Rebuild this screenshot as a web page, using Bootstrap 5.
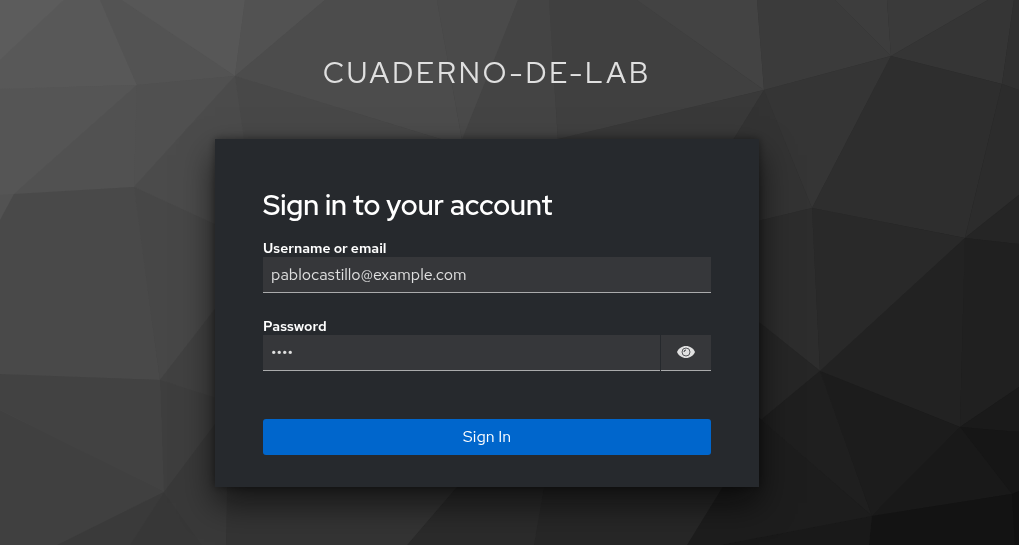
<!DOCTYPE html>
<html lang="en">
<head>
<meta charset="utf-8">
<meta name="viewport" content="width=device-width, initial-scale=1">
<title>Sign in to cuaderno-de-lab</title>
<link href="https://cdn.jsdelivr.net/npm/bootstrap@5.3.0/dist/css/bootstrap.min.css" rel="stylesheet">
<style>
  body { background: #333; color: #fff; font-family: "Red Hat Text", Lato, sans-serif; font-size: 16px; line-height: 24px; }
  .backdrop { position: fixed; inset: 0; width: 100%; height: 100%; z-index: -1; }
  .login-page { padding: 53px 45px 58px 0; }
  .realm-name { font-family: "Red Hat Display", "Red Hat Text", Lato, sans-serif; font-size: 29px; font-weight: 400; line-height: 40px; letter-spacing: 3px; color: #e0e0e0; margin-bottom: 46px; }
  .login-box { max-width: 544px; padding: 48px 48px 32px; background: #26292d; box-shadow: 0 16px 32px rgba(3,3,3,.64), 0 0 8px rgba(3,3,3,.4); }
  .login-title { font-family: "Red Hat Display", "Red Hat Text", Lato, sans-serif; font-size: 28px; font-weight: 600; line-height: 36px; margin-bottom: 16px; }
  .login-label { display: block; font-size: 14px; font-weight: 600; line-height: 18px; }
  .login-field { height: 36px; padding: 6px 8px; border: 0; border-bottom: 1px solid #aaabac; border-radius: 0; background: #36373a; color: #e0e0e0; font-size: 16px; line-height: 24px; }
  .login-field:focus { background: #36373a; color: #e0e0e0; box-shadow: none; }
  .password-row { gap: 1px; }
  .reveal { width: 50px; height: 36px; padding: 0 0 2px; border: 0; border-bottom: 1px solid #aaabac; background: #36373a; }
  .login-submit { height: 36px; padding: 6px 16px; border: 0; border-radius: 3px; background: #06c; color: #fff; font-size: 16px; line-height: 24px; }
</style>
</head>
<body>
<svg class="backdrop" viewBox="0 0 1019 545" preserveAspectRatio="xMidYMid slice" aria-hidden="true">
  <defs>
    <linearGradient id="base" gradientUnits="userSpaceOnUse" x1="0" y1="0" x2="800" y2="700">
      <stop offset="0" stop-color="#5e5e5e"/>
      <stop offset="1" stop-color="#151515"/>
    </linearGradient>
  </defs>
  <rect width="1019" height="545" fill="url(#base)"/>
  <path fill="#5c5c5c" d="M0 0H64L0 60z"/>
  <path fill="#585858" d="M64 0H100L137 85L0 89V60z"/>
  <path fill="#535353" d="M100 0H122L235 76L137 85z"/>
  <path fill="#575757" d="M122 0H245L235 76z"/>
  <path fill="#525252" d="M245 0H325L235 76z"/>
  <path fill="#4c4c4c" d="M325 0H437L463 146L235 76z"/>
  <path fill="#4a4a4a" d="M437 0H518L463 146z"/>
  <path fill="#444" d="M518 0H549L558 142H461z"/>
  <path fill="#404040" d="M549 0H637L764 90L558 139z"/>
  <path fill="#434343" d="M637 0H757L764 90z"/>
  <path fill="#3b3b3b" d="M757 0H835L891 56L764 90z"/>
  <path fill="#3d3d3d" d="M835 0H887L891 56z"/>
  <path fill="#3a3a3a" d="M887 0H988L891 56z"/>
  <path fill="#353535" d="M988 0H1014L1002 84L891 56z"/>
  <path fill="#303030" d="M1014 0H1019V90L1002 84z"/>
  <path fill="#393939" d="M558 139L764 90L730 145H558z"/>
  <path fill="#333" d="M764 90L812 208L750 223L730 145z"/>
  <path fill="#353535" d="M764 90L891 56L812 208z"/>
  <path fill="#2e2e2e" d="M891 56L1002 84L965 238L812 208z"/>
  <path fill="#2c2c2c" d="M1002 84L1019 90V195L965 238z"/>
  <path fill="#252525" d="M1019 195V244L965 238z"/>
  <path fill="#2d2d2d" d="M812 208L820 371L750 315V223z"/>
  <path fill="#292929" d="M812 208L965 238L820 371z"/>
  <path fill="#222" d="M965 238L960 427L820 371z"/>
  <path fill="#202020" d="M965 238L1019 244V387L960 427z"/>
  <path fill="#262626" d="M820 371L750 429V315z"/>
  <path fill="#1f1f1f" d="M820 371L872 516L750 410V429z"/>
  <path fill="#1c1c1c" d="M820 371L960 427L872 516z"/>
  <path fill="#1a1a1a" d="M960 427L1019 387V432z"/>
  <path fill="#161616" d="M960 427L1019 432V491L1012 494z"/>
  <path fill="#191919" d="M960 427L1012 494L872 516z"/>
  <path fill="#131313" d="M872 516L1012 494L1015 545H869z"/>
  <path fill="#101010" d="M1012 494L1019 491V545H1015z"/>
  <path fill="#191919" d="M720 545L872 516L869 545z"/>
  <path fill="#1d1d1d" d="M687 545L750 440V410L872 516L720 545z"/>
  <path fill="#272727" d="M534 545L546 475H730L687 545z"/>
  <path fill="#2b2b2b" d="M407 545L467 475H546L534 545z"/>
  <path fill="#343434" d="M226 545L227 475H467L407 545z"/>
  <path fill="#555" d="M0 89L137 85L14 194L0 195z"/>
  <path fill="#515151" d="M137 85L134 187L14 194z"/>
  <path fill="#505050" d="M137 85L235 76L134 187z"/>
  <path fill="#525252" d="M0 195L14 194L0 220z"/>
  <path fill="#494949" d="M14 194L134 187L160 380L0 374V220z"/>
  <path fill="#4b4b4b" d="M235 76L245 145L225 229L134 187z"/>
  <path fill="#484848" d="M235 76L463 146H245z"/>
  <path fill="#474747" d="M134 187L225 229V296L160 380z"/>
  <path fill="#414141" d="M160 380L225 296V401z"/>
  <path fill="#3e3e3e" d="M160 380L225 401V411L164 492z"/>
  <path fill="#424242" d="M0 374L160 380L164 492L0 410z"/>
  <path fill="#404040" d="M0 410L164 492L57 545H0z"/>
  <path fill="#3a3a3a" d="M57 545L164 492L130 545z"/>
  <path fill="#373737" d="M130 545L164 492L202 545z"/>
  <path fill="#393939" d="M164 492L227 408L226 545H202z"/>
</svg>

<main class="login-page container-fluid d-flex flex-column align-items-center">
  <header class="realm-name text-uppercase text-center">cuaderno-de-lab</header>
  <section class="login-box w-100">
    <h1 class="login-title">Sign in to your account</h1>
    <form>
      <div class="mb-4">
        <label class="login-label" for="username">Username or email</label>
        <input class="login-field form-control" type="text" id="username" value="pablocastillo@example.com">
      </div>
      <div class="mb-5">
        <label class="login-label" for="password">Password</label>
        <div class="password-row d-flex">
          <input class="login-field form-control" type="password" id="password" value="1234">
          <button class="reveal btn rounded-0 flex-shrink-0 d-flex align-items-center justify-content-center" type="button" aria-label="Show password">
            <svg width="18" height="12" viewBox="0 0 18 12" aria-hidden="true">
              <path fill="#e0e0e0" d="M9 0C5 0 1.500 2.400 0 6C1.500 9.600 5 12 9 12S16.500 9.600 18 6C16.500 2.400 13 0 9 0z"/>
              <circle cx="9" cy="6" r="4" fill="none" stroke="#56575a" stroke-width="1"/>
              <path d="M7 6A2 2 0 0 1 9 4" fill="none" stroke="#36373a" stroke-width="1"/>
            </svg>
          </button>
        </div>
      </div>
      <button class="login-submit btn w-100 d-block" type="submit">Sign In</button>
    </form>
  </section>
</main>
<script src="https://cdn.jsdelivr.net/npm/bootstrap@5.3.0/dist/js/bootstrap.bundle.min.js"></script>
</body>
</html>
